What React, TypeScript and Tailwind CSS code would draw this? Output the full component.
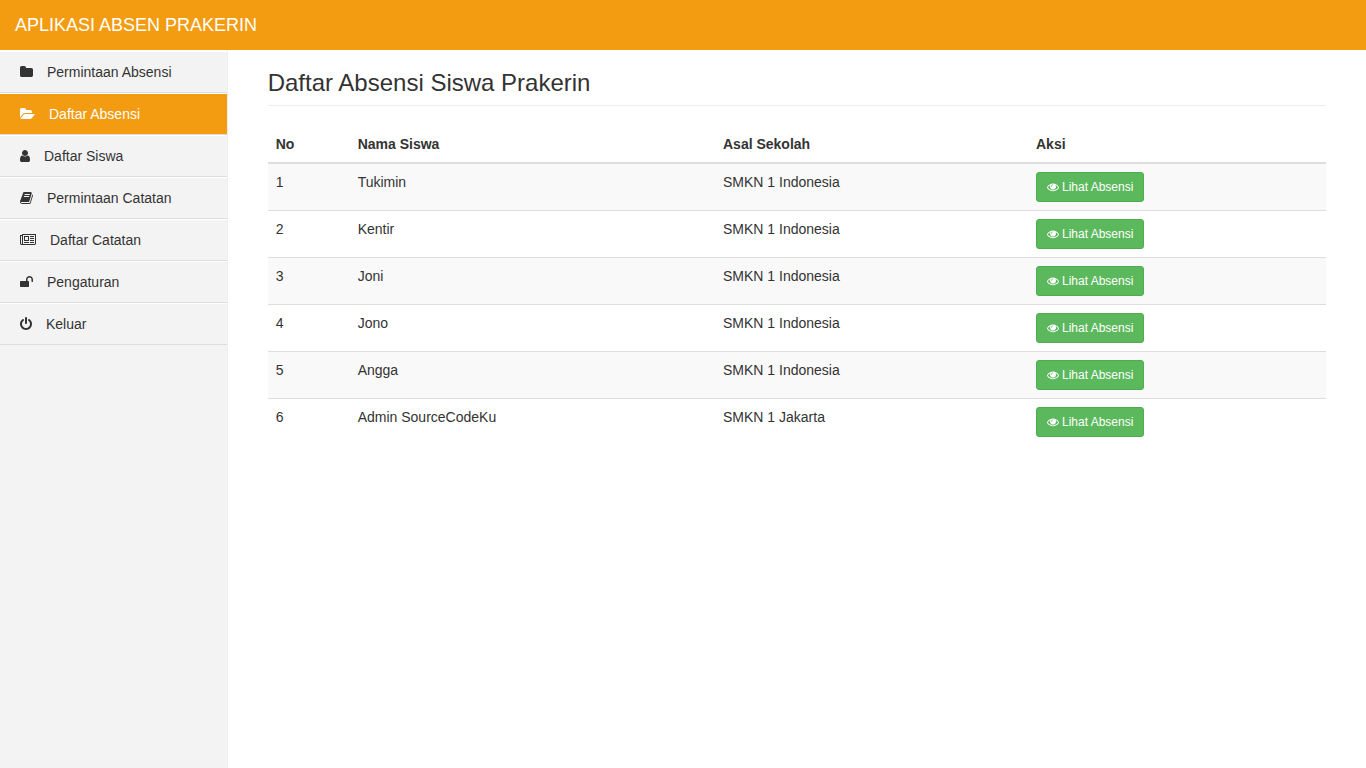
import React from "react";
import clsx from "clsx";

interface IIcon {
  viewBox: string;
  path: string;
  className: string;
}

interface IMenuItem {
  label: string;
  icon: IIcon;
  active?: boolean;
}

interface ISiswa {
  nama: string;
  sekolah: string;
}

const menu: IMenuItem[] = [
  {
    label: "Permintaan Absensi",
    icon: {
      viewBox: "64 0 1664 1792",
      className: "h-[14px] w-[13px]",
      path: "M1728 608v704q0 92-66 158t-158 66h-1216q-92 0-158-66t-66-158v-960q0-92 66-158t158-66h320q92 0 158 66t66 158v32h672q92 0 158 66t66 158z",
    },
  },
  {
    label: "Daftar Absensi",
    active: true,
    icon: {
      viewBox: "0 0 1920 1792",
      className: "h-[14px] w-[15px]",
      path: "M1879 952q0 31-31 66l-336 396q-43 51-120.5 86.5t-143.5 35.5h-1088q-34 0-60.5-13t-26.5-43q0-31 31-66l336-396q43-51 120.5-86.5t143.5-35.5h1088q34 0 60.5 13t26.5 43zm-343-344v160h-832q-94 0-197 47.5t-164 119.5l-337 396-5 6q0-4-.5-12.5t-.5-12.5v-960q0-92 66-158t158-66h320q92 0 158 66t66 158v32h544q92 0 158 66t66 158z",
    },
  },
  {
    label: "Daftar Siswa",
    icon: {
      viewBox: "256 0 1280 1792",
      className: "h-[14px] w-[10px]",
      path: "M1536 1399q0 109-62.5 187t-150.5 78h-854q-88 0-150.5-78t-62.5-187q0-85 8.5-160.5t31.5-152 58.5-131 94-89 134.5-34.5q131 128 313 128t313-128q76 0 134.5 34.5t94 89 58.5 131 31.5 152 8.5 160.5zm-256-887q0 159-112.5 271.5t-271.5 112.5-271.5-112.5-112.5-271.5 112.5-271.5 271.5-112.5 271.5 112.5 112.5 271.5z",
    },
  },
  {
    label: "Permintaan Catatan",
    icon: {
      viewBox: "64 0 1664 1792",
      className: "h-[14px] w-[13px]",
      path: "M1703 478q40 57 18 129l-275 906q-19 64-76.5 107.5t-122.5 43.5h-923q-77 0-148.5-53.5t-99.5-131.5q-24-67-2-127 0-4 3-27t4-37q1-8-3-21.5t-3-19.5q2-11 8-21t16.5-23.5 16.5-23.5q23-38 45-91.5t30-91.5q3-10 .5-30t-.5-28q3-11 17-28t17-23q21-36 42-92t25-90q1-9-2.5-32t.5-28q4-13 22-30.5t22-22.5q19-26 42.5-84.5t27.5-96.5q1-8-3-25.5t-2-26.5q2-8 9-18t18-23 17-21q8-12 16.5-30.5t15-35 16-36 19.5-32 26.5-23.5 36-11.5 47.5 5.5l-1 3q38-9 51-9h761q74 0 114 56t18 130l-274 906q-36 119-71.5 153.5t-128.5 34.5h-869q-27 0-38 15-11 16-1 43 24 70 144 70h923q29 0 56-15.5t35-41.5l300-987q7-22 5-57 38 15 59 43zm-1064 2q-4 13 2 22.5t20 9.5h608q13 0 25.5-9.5t16.5-22.5l21-64q4-13-2-22.5t-20-9.5h-608q-13 0-25.5 9.5t-16.5 22.5zm-83 256q-4 13 2 22.5t20 9.5h608q13 0 25.5-9.5t16.5-22.5l21-64q4-13-2-22.5t-20-9.5h-608q-13 0-25.5 9.5t-16.5 22.5z",
    },
  },
  {
    label: "Daftar Catatan",
    icon: {
      viewBox: "0 0 2048 1792",
      className: "h-[14px] w-[16px]",
      path: "M1024 512h-384v384h384v-384zm128 640v128h-640v-128h640zm0-768v640h-640v-640h640zm640 768v128h-512v-128h512zm0-256v128h-512v-128h512zm0-256v128h-512v-128h512zm0-256v128h-512v-128h512zm-1536 960v-960h-128v960q0 26 19 45t45 19 45-19 19-45zm1664 0v-1088h-1536v1088q0 33-11 64h1483q26 0 45-19t19-45zm128-1216v1216q0 80-56 136t-136 56h-1664q-80 0-136-56t-56-136v-1088h256v-128h1792z",
    },
  },
  {
    label: "Pengaturan",
    icon: {
      viewBox: "64 0 1664 1792",
      className: "h-[14px] w-[13px]",
      path: "M1728 576v256q0 26-19 45t-45 19h-64q-26 0-45-19t-19-45v-256q0-106-75-181t-181-75-181 75-75 181v192h96q40 0 68 28t28 68v576q0 40-28 68t-68 28h-960q-40 0-68-28t-28-68v-576q0-40 28-68t68-28h672v-192q0-185 131.5-316.5t316.5-131.5 316.5 131.5 131.5 316.5z",
    },
  },
  {
    label: "Keluar",
    icon: {
      viewBox: "128 0 1536 1792",
      className: "h-[14px] w-[12px]",
      path: "M1664 896q0 156-61 298t-164 245-245 164-298 61-298-61-245-164-164-245-61-298q0-182 80.5-343t226.5-270q43-32 95.5-25t83.5 50q32 42 24.5 94.5t-49.5 84.5q-98 74-151.5 181t-53.5 228q0 104 40.5 198.5t109.5 163.5 163.5 109.5 198.5 40.5 198.5-40.5 163.5-109.5 109.5-163.5 40.5-198.5q0-121-53.5-228t-151.5-181q-42-32-49.5-84.5t24.5-94.5q31-43 84-50t95 25q146 109 226.5 270t80.5 343zm-640-768v640q0 52-38 90t-90 38-90-38-38-90v-640q0-52 38-90t90-38 90 38 38 90z",
    },
  },
];

const eyeIcon: IIcon = {
  viewBox: "0 0 1792 1792",
  className: "h-3 w-3",
  path: "M1664 960q-152-236-381-353 61 104 61 225 0 185-131.5 316.5t-316.5 131.5-316.5-131.5-131.5-316.5q0-121 61-225-229 117-381 353 133 205 333.5 326.5t434.5 121.5 434.5-121.5 333.5-326.5zm-720-384q0-20-14-34t-34-14q-125 0-214.5 89.5t-89.5 214.5q0 20 14 34t34 14 34-14 14-34q0-86 61-147t147-61q20 0 34-14t14-34zm848 384q0 34-20 69-140 230-376.5 368.5t-499.5 138.5-499.5-139-376.5-368q-20-35-20-69t20-69q140-229 376.5-368t499.5-139 499.5 139 376.5 368q20 35 20 69z",
};

const siswa: ISiswa[] = [
  { nama: "Tukimin", sekolah: "SMKN 1 Indonesia" },
  { nama: "Kentir", sekolah: "SMKN 1 Indonesia" },
  { nama: "Joni", sekolah: "SMKN 1 Indonesia" },
  { nama: "Jono", sekolah: "SMKN 1 Indonesia" },
  { nama: "Angga", sekolah: "SMKN 1 Indonesia" },
  { nama: "Admin SourceCodeKu", sekolah: "SMKN 1 Jakarta" },
];

function Icon({ viewBox, path, className }: IIcon) {
  return (
    <svg
      viewBox={viewBox}
      className={clsx("shrink-0 fill-current", className)}
      aria-hidden="true"
    >
      <path d={path} />
    </svg>
  );
}

function Sidebar() {
  return (
    <nav className="w-1/6 shrink-0 border-r border-[#eee] bg-[#f3f3f3]">
      <ul>
        {menu.map((item) => (
          <li
            key={item.label}
            className="border-t border-b border-t-white border-b-[#ddd]"
          >
            <a
              href="#"
              className={clsx(
                "flex h-10 items-center gap-[14px] px-5",
                item.active && "bg-[#f39c12] text-white"
              )}
            >
              <Icon {...item.icon} />
              {item.label}
            </a>
          </li>
        ))}
      </ul>
    </nav>
  );
}

function TabelSiswa() {
  return (
    <table className="w-full">
      <thead>
        <tr className="border-b-2 border-[#ddd] text-left">
          <th className="w-[82px] p-2">No</th>
          <th className="p-2">Nama Siswa</th>
          <th className="w-[313px] p-2">Asal Sekolah</th>
          <th className="w-[298px] p-2">Aksi</th>
        </tr>
      </thead>
      <tbody>
        {siswa.map((s, i) => (
          <tr
            key={s.nama}
            className="border-t border-[#ddd] align-top odd:bg-[#f9f9f9]"
          >
            <td className="p-2">{i + 1}</td>
            <td className="p-2">{s.nama}</td>
            <td className="p-2">{s.sekolah}</td>
            <td className="p-2">
              <button
                type="button"
                className="flex h-[30px] items-center gap-[3px] rounded-[3px] border border-[#4cae4c] bg-[#5cb85c] px-[10px] text-xs whitespace-nowrap text-white"
              >
                <Icon {...eyeIcon} />
                Lihat Absensi
              </button>
            </td>
          </tr>
        ))}
      </tbody>
    </table>
  );
}

function App() {
  return (
    <div className="flex min-h-screen flex-col bg-white font-['Liberation_Sans',Arial,sans-serif] text-[14px] leading-5 text-[#333]">
      <header className="mb-px flex h-[50px] items-center bg-[#f39c12] px-[15px]">
        <a href="#" className="text-lg text-white">
          APLIKASI ABSEN PRAKERIN
        </a>
      </header>
      <div className="flex flex-1">
        <Sidebar />
        <main className="flex-1 px-10 pt-[18px]">
          <h1 className="mb-5 border-b border-[#eee] pb-2 text-2xl leading-7">
            Daftar Absensi Siswa Prakerin
          </h1>
          <TabelSiswa />
        </main>
      </div>
    </div>
  );
}

export default App;
